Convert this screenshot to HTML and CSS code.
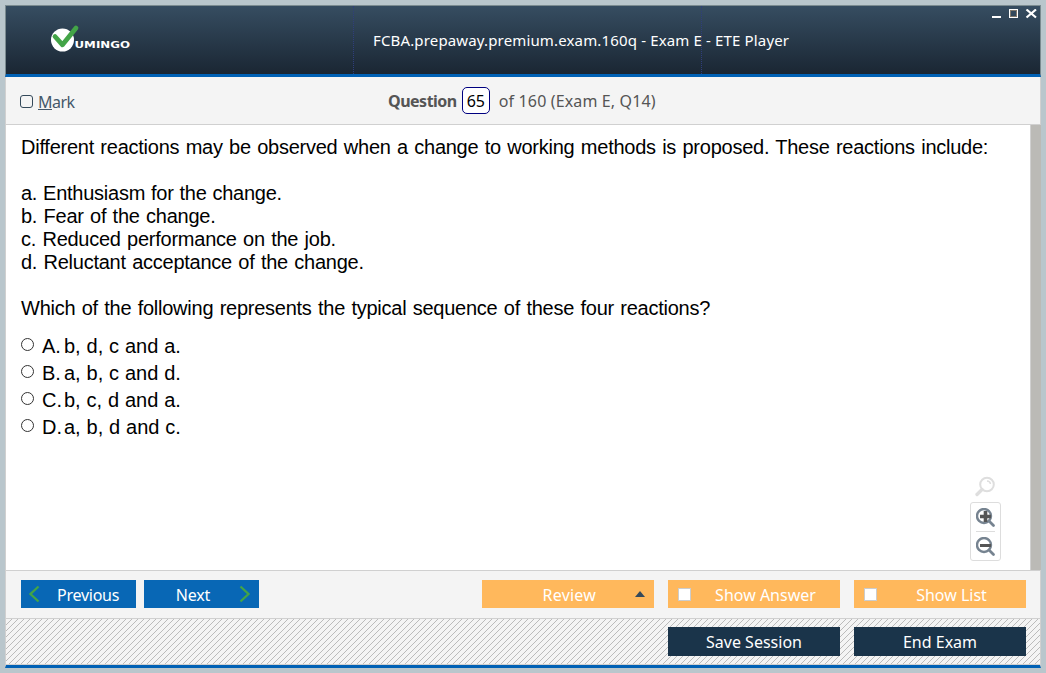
FILE: index.html
```html
<!DOCTYPE html>
<html lang="en">
<head>
<meta charset="utf-8">
<title>FCBA.prepaway.premium.exam.160q - Exam E - ETE Player</title>
<link rel="stylesheet" href="styles.css">
</head>
<body>
<div class="window">
  <header class="header">
    <div class="brand">
      <svg width="82" height="30" viewBox="0 0 82 30">
        <circle cx="13.500" cy="16" r="11.500" fill="#fff"/>
        <path d="M6 12.500L13.500 20.800L27 4" fill="none" stroke="#43a447" stroke-width="4.800" stroke-linecap="round" stroke-linejoin="round"/>
        <text class="brand-text" x="25.500" y="24.300" textLength="55.500" lengthAdjust="spacingAndGlyphs">UMINGO</text>
      </svg>
    </div>
    <div class="title"><span>FCBA.prepaway.premium.exam.160q - Exam E - ETE Player</span></div>
    <div class="controls">
      <svg width="48" height="14" viewBox="0 0 48 14" fill="none">
        <path d="M2 8H11" stroke="#fff" stroke-width="2"/>
        <rect x="19.500" y="0.500" width="8" height="8" stroke="#fff"/>
        <rect x="20.500" y="1.500" width="6" height="6" stroke="#81796d"/>
        <path d="M36.500 0.500L46 8.500M46 0.500L36.500 8.500" stroke="#fff" stroke-width="2.200"/>
      </svg>
    </div>
  </header>
  <div class="toolbar">
    <label class="mark"><i class="mark-box"></i><span><u>M</u>ark</span></label>
    <div class="position"><b>Question</b><span class="number">65</span><span class="total">of 160 (Exam E, Q14)</span></div>
  </div>
  <main class="content">
    <div class="question">
      <p class="l1">Different reactions may be observed when a change to working methods is proposed. These reactions include:</p>
      <p class="gap l2">a. Enthusiasm for the change.</p>
      <p class="l3">b. Fear of the change.</p>
      <p class="l4">c. Reduced performance on the job.</p>
      <p class="l5">d. Reluctant acceptance of the change.</p>
      <p class="gap l6">Which of the following represents the typical sequence of these four reactions?</p>
      <div class="options">
        <label class="option"><i class="radio"></i><span class="letter">A.</span><span>b, d, c and a.</span></label>
        <label class="option"><i class="radio"></i><span class="letter">B.</span><span>a, b, c and d.</span></label>
        <label class="option"><i class="radio"></i><span class="letter">C.</span><span>b, c, d and a.</span></label>
        <label class="option"><i class="radio"></i><span class="letter">D.</span><span>a, b, d and c.</span></label>
      </div>
    </div>
    <div class="zoom">
      <svg class="lens" width="22" height="22" viewBox="0 0 22 22" fill="none" stroke="#dedede">
        <circle cx="13" cy="8.500" r="6.800" stroke-width="2"/>
        <path d="M8 13.500L3 18.500" stroke-width="3.400" stroke-linecap="round"/>
        <path d="M13 5Q16 5 16.500 8" stroke-width="1.500"/>
      </svg>
      <div class="zoom-box">
        <svg width="20" height="20" viewBox="0 0 20 20" fill="none">
          <circle cx="8" cy="8" r="7" stroke="#768390" stroke-width="2.400"/>
          <path d="M13 13L17.500 17.500" stroke="#768390" stroke-width="2.800" stroke-linecap="round"/>
          <path d="M4 8.500H15M9.500 3V14" stroke="#555" stroke-width="3.600"/>
        </svg>
        <hr>
        <svg width="20" height="20" viewBox="0 0 20 20" fill="none">
          <circle cx="8" cy="8" r="7" stroke="#768390" stroke-width="2.400"/>
          <path d="M13 13L17.500 17.500" stroke="#768390" stroke-width="2.800" stroke-linecap="round"/>
          <path d="M4 8.500H15" stroke="#555" stroke-width="3"/>
        </svg>
      </div>
    </div>
    <div class="scrollbar"></div>
  </main>
  <div class="actions">
    <button class="btn nav prev"><svg width="12" height="18" viewBox="0 0 12 18"><path d="M10.500 1.500L2.500 9L10.500 16.500" fill="none" stroke="#43a447" stroke-width="2.300"/></svg><span>Previous</span></button>
    <button class="btn nav next"><span>Next</span><svg width="12" height="18" viewBox="0 0 12 18"><path d="M1.500 1.500L9.500 9L1.500 16.500" fill="none" stroke="#43a447" stroke-width="2.300"/></svg></button>
    <button class="btn orange review"><span>Review</span><svg width="10" height="6" viewBox="0 0 10 6"><path d="M0 6L5 0L10 6Z" fill="#34495a"/></svg></button>
    <button class="btn orange check"><i></i><span>Show Answer</span></button>
    <button class="btn orange check"><i></i><span>Show List</span></button>
  </div>
  <footer class="footer">
    <button class="btn dark">Save Session</button>
    <button class="btn dark">End Exam</button>
  </footer>
</div>
</body>
</html>
```
FILE: styles.css
```css
* { box-sizing: border-box; }
body { margin: 0; padding: 5px; height: 673px; background: #b9c6cc; font-family: "Noto Sans", sans-serif; overflow: hidden; }
p { margin: 0; }
svg { display: block; flex: none; }
.window { width: 1036px; height: 663px; display: flex; flex-direction: column; background: #fff; }
.header { height: 72px; display: grid; grid-template-columns: 348px 348px 1fr; border: 1px solid #7b8b90; border-bottom: 3px solid #0061b5; background: linear-gradient(#364d61, #1a2633); color: #fff; }
.brand { padding: 18px 0 0 43px; border-right: 1px dotted #2f3e7c; }
.brand-text { font: bold 9.5px "DejaVu Sans", sans-serif; fill: #fff; }
.title { padding: 23px 0 0 19px; font-size: 15px; line-height: 22px; white-space: nowrap; border-right: 1px dotted #2f3e7c; }
.title span { letter-spacing: 0.15px; }
.controls { display: flex; justify-content: flex-end; padding: 3px 2px 0 0; }
.toolbar { height: 48px; display: flex; border: 1px solid #d0d0d0; border-width: 0 1px 1px; background: #f4f4f4; color: #555; }
.mark { width: 382px; display: flex; padding: 14px 0 0 14px; gap: 5px; font-size: 16px; line-height: 23px; letter-spacing: -0.5px; color: #44586a; }
.mark-box { width: 13px; height: 13px; margin-top: 4px; border: 1px solid #34495a; border-radius: 3px; }
.position { display: flex; align-items: flex-start; padding-top: 10px; font-size: 16px; line-height: 28px; white-space: nowrap; }
.position b { letter-spacing: -0.5px; }
.number { width: 28px; height: 27px; margin: 0 9px 0 5px; border: 1px solid #000080; border-radius: 5px; background: #fff; color: #000; text-align: center; line-height: 27px; }
.total { letter-spacing: 0.14px; }
.content { height: 446px; display: flex; border-left: 1px solid #d0d0d0; border-bottom: 1px solid #d0d0d0; }
.question { width: 964px; padding: 11px 0 0 15px; font: 20px/23px "Liberation Sans", sans-serif; letter-spacing: -0.25px; word-spacing: 1.07px; color: #000; white-space: nowrap; }
.l2 { word-spacing: 0.6px; }
.gap { margin-top: 23px; }
.options { display: flex; flex-direction: column; gap: 4px; margin-top: 15px; letter-spacing: 0; word-spacing: 0.3px; }
.option { display: flex; height: 23px; }
.radio { width: 13px; height: 13px; margin: 3px 8px 0 0; border: 1px solid #333; border-radius: 50%; }
.letter { width: 22px; }
.zoom { width: 31px; padding-top: 351px; }
.lens { margin-left: 4px; }
.zoom-box { width: 31px; height: 59px; margin-top: 4px; padding: 5px; border: 1px solid #ddd; border-radius: 3px; }
.zoom-box hr { width: 19px; height: 1px; margin: 3px 0 5px; border: 0; background: #ddd; }
.scrollbar { width: 11px; margin-left: auto; background: #bbbab6; border-left: 1px solid #d0d0d0; }
.actions { height: 48px; display: flex; padding: 9px 14px 0 15px; border: 1px solid #d0d0d0; border-width: 0 1px 1px; background: #f4f4f4; }
.btn { display: flex; align-items: center; justify-content: center; height: 28px; width: 172px; padding: 2px 0 0; border: 0; font: 16px/22px "Noto Sans", sans-serif; color: #fff; white-space: nowrap; }
.nav { width: 115px; background: #0867b5; }
.nav svg { margin-top: -2px; }
.prev { margin-right: 8px; justify-content: flex-start; padding-left: 7px; gap: 17px; letter-spacing: -0.25px; }
.next { justify-content: flex-end; padding-right: 8px; gap: 29px; letter-spacing: -0.2px; }
.orange { background: #ffb85c; }
.review { margin-left: auto; justify-content: flex-end; gap: 39px; padding-right: 9px; letter-spacing: 0.2px; }
.review svg { margin-top: -2px; }
.check { margin-left: 14px; justify-content: flex-start; padding-left: 10px; }
.check i { width: 13px; height: 13px; margin-top: -1px; border: 1px solid #ccc; background: #fff; }
.check span { flex: 1; text-align: center; }
.footer { height: 49px; display: flex; justify-content: flex-end; gap: 14px; padding: 8px 14px 0 0; border: 1px solid #d0d0d0; border-width: 0 1px 3px; border-bottom-color: #0061b5; box-shadow: inset 0 -1px #d0d0d0; background: #f4f4f4 url("data:image/svg+xml,%3Csvg xmlns='http://www.w3.org/2000/svg' width='6' height='6' shape-rendering='crispEdges'%3E%3Cpath d='M5 0h1v1h-1zM4 1h1v1h-1zM3 2h1v1h-1zM2 3h1v1h-1zM1 4h1v1h-1zM0 5h1v1h-1z' fill='%23bbb'/%3E%3C/svg%3E"); }
.dark { height: 29px; padding-top: 0; background: #1a344a; }
```
